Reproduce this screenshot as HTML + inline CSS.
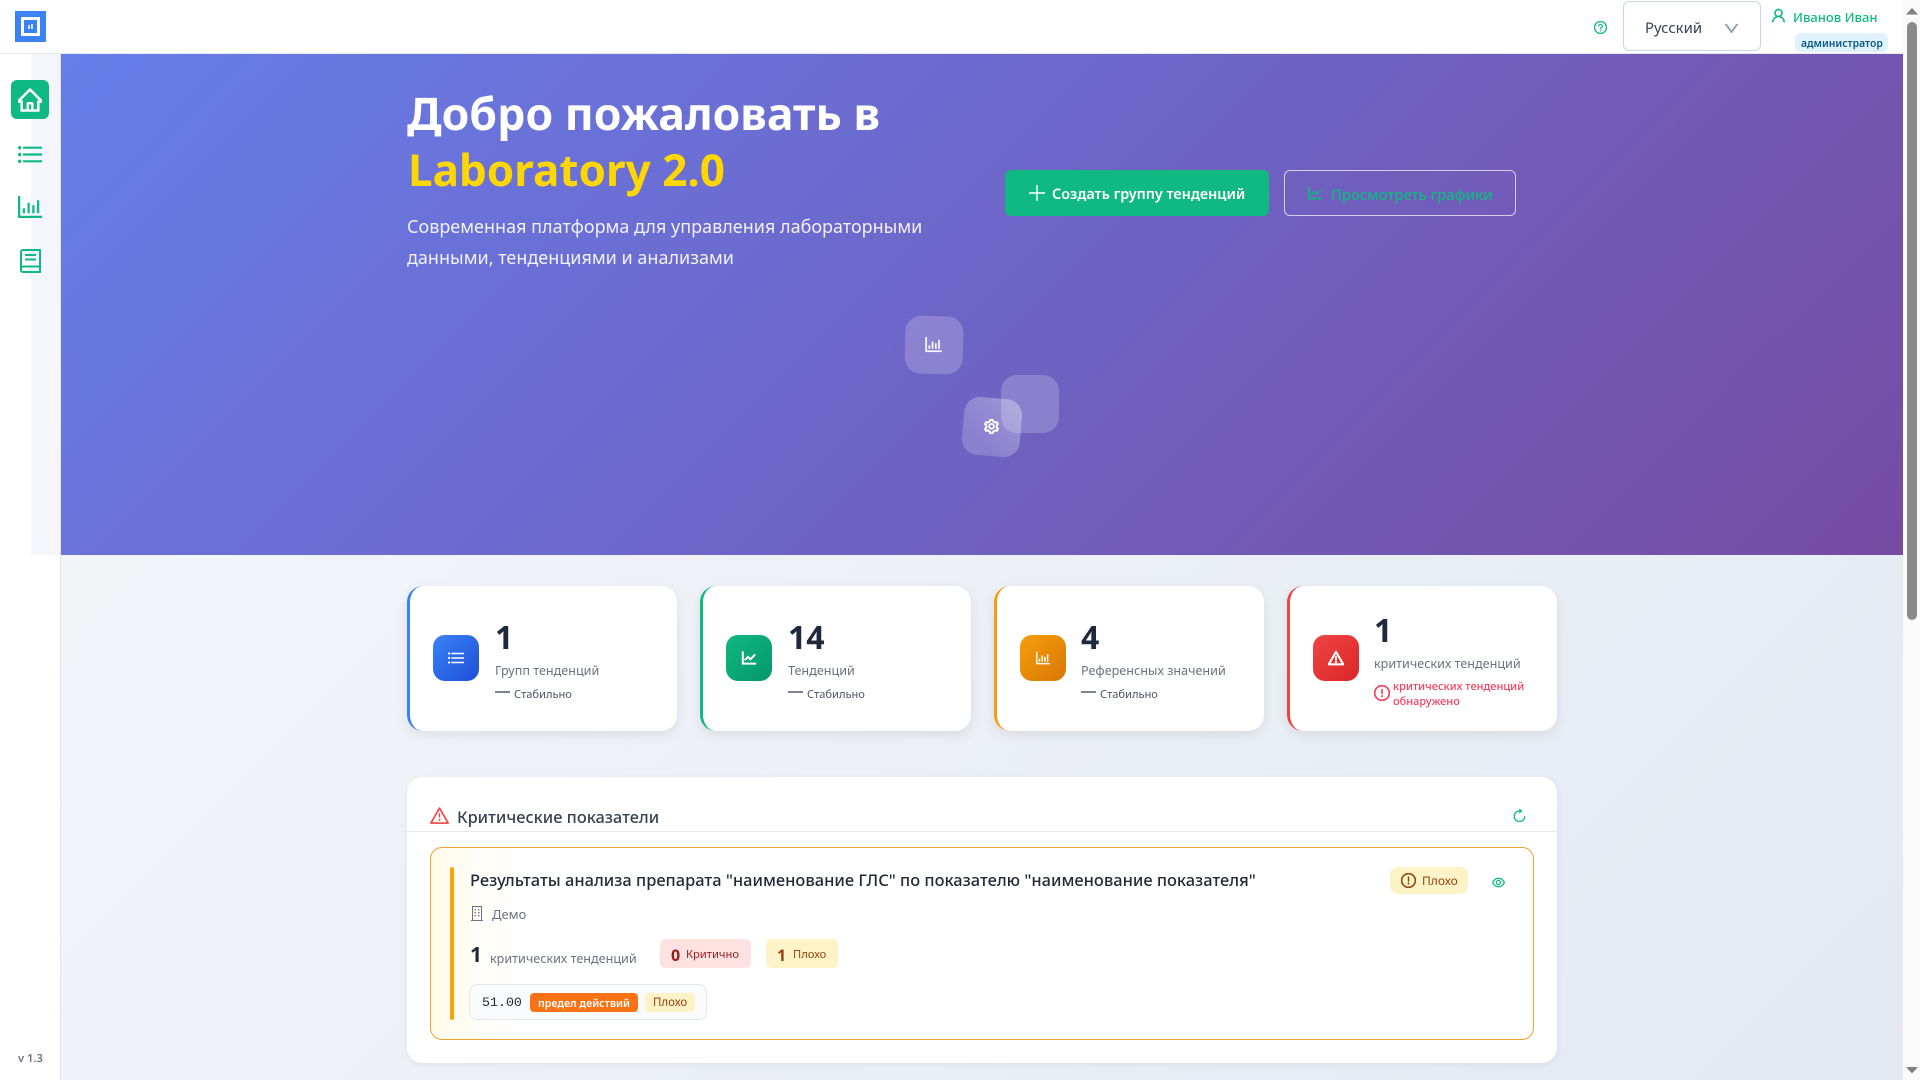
<!DOCTYPE html>
<html lang="ru"><head><meta charset="utf-8"><title>Laboratory 2.0</title>
<style>
*{box-sizing:border-box}
html,body{margin:0;padding:0;width:1920px;height:1080px;overflow:hidden;background:#fff}
body{position:relative;font-family:"Noto Sans","Noto Sans CJK SC","Liberation Sans",sans-serif;color:#1f2937}
.a{position:absolute}
.t{position:absolute;white-space:nowrap;line-height:20px}
svg{position:absolute;display:block;fill:currentColor}
svg.s{stroke:currentColor;stroke-width:10}
svg.b{stroke:currentColor;stroke-width:22}
svg.bb{stroke:currentColor;stroke-width:40}
.card{position:absolute;top:586px;width:270px;height:145px;background:#fff;border-radius:16px;box-shadow:0 4px 12px rgba(0,0,0,.08);border-left:3px solid}
.ic{position:absolute;top:635px;width:46px;height:46px;border-radius:12px;color:#fff}
.num{position:absolute;white-space:nowrap;font-size:32px;font-weight:700;line-height:40px;color:#1e293b}
.lab{position:absolute;white-space:nowrap;font-size:12.6px;line-height:20px;color:#6b7280}
.st{position:absolute;white-space:nowrap;font-size:11.1px;line-height:16px;color:#4b5563}
.dash{position:absolute;width:15px;height:2px;background:#7b8494}
</style></head><body>
<svg width="0" height="0" style="position:absolute"><defs>
<symbol id="home" viewBox="64 64 896 896"><path d="M946.5 505L560.1 118.8l-25.9-25.9a31.5 31.5 0 0 0-44.4 0L77.5 505a63.9 63.9 0 0 0-18.8 46c.4 35.2 29.7 63.3 64.9 63.3h42.5V940h691.8V614.3h43.4c17.1 0 33.2-6.7 45.3-18.8a63.6 63.6 0 0 0 18.7-45.3c0-17-6.7-33.1-18.8-45.2zM568 868H456V664h112v204zm217.9-325.7V868H632V640c0-22.1-17.9-40-40-40H432c-22.1 0-40 17.9-40 40v228H238.1V542.3h-96l370-369.7 23.1 23.1L882 542.3h-96.1z"/></symbol>
<symbol id="list" viewBox="0 0 24 17"><path d="M5 .6h19v2.200H5zM5 7.400h19v2.200H5zM5 14.200h19v2.200H5z"/><circle cx="1.700" cy="1.700" r="1.700"/><circle cx="1.700" cy="8.500" r="1.700"/><circle cx="1.700" cy="15.300" r="1.700"/></symbol>
<symbol id="bar" viewBox="64 64 896 896"><path d="M888 792H200V168c0-4.4-3.6-8-8-8h-56c-4.4 0-8 3.6-8 8v688c0 4.4 3.6 8 8 8h752c4.4 0 8-3.6 8-8v-56c0-4.4-3.6-8-8-8zm-600-80h56c4.4 0 8-3.6 8-8V560c0-4.4-3.6-8-8-8h-56c-4.4 0-8 3.6-8 8v144c0 4.4 3.6 8 8 8zm152 0h56c4.4 0 8-3.6 8-8V384c0-4.4-3.6-8-8-8h-56c-4.4 0-8 3.6-8 8v320c0 4.4 3.6 8 8 8zm152 0h56c4.4 0 8-3.6 8-8V462c0-4.4-3.6-8-8-8h-56c-4.4 0-8 3.6-8 8v242c0 4.4 3.6 8 8 8zm152 0h56c4.4 0 8-3.6 8-8V304c0-4.4-3.6-8-8-8h-56c-4.4 0-8 3.6-8 8v400c0 4.4 3.6 8 8 8z"/></symbol>
<symbol id="line" viewBox="64 64 896 896"><path d="M888 792H200V168c0-4.4-3.6-8-8-8h-56c-4.4 0-8 3.6-8 8v688c0 4.4 3.6 8 8 8h752c4.4 0 8-3.6 8-8v-56c0-4.4-3.6-8-8-8zM305.8 637.7c3.1 3.1 8.1 3.1 11.3 0l138.3-137.6L583 628.5c3.1 3.1 8.2 3.1 11.3 0l275.4-275.3c3.1-3.1 3.1-8.2 0-11.3l-39.6-39.6a8.03 8.03 0 0 0-11.3 0l-230 229.9L461.4 404a8.03 8.03 0 0 0-11.3 0L266.3 586.7a8.03 8.03 0 0 0 0 11.4l39.5 39.6z"/></symbol>
<symbol id="gear" viewBox="64 64 896 896"><path d="M924.8 625.7l-65.5-56c3.1-19 4.7-38.4 4.7-57.8s-1.6-38.8-4.7-57.8l65.5-56a32.03 32.03 0 0 0 9.3-35.2l-.9-2.6a443.74 443.74 0 0 0-79.7-137.9l-1.8-2.1a32.12 32.12 0 0 0-35.1-9.5l-81.3 28.9c-30-24.6-63.5-44-99.7-57.6l-15.7-85a32.05 32.05 0 0 0-25.8-25.7l-2.7-.5c-52.1-9.4-106.9-9.4-159 0l-2.7.5a32.05 32.05 0 0 0-25.8 25.7l-15.8 85.4a351.86 351.86 0 0 0-99 57.4l-81.9-29.1a32 32 0 0 0-35.1 9.5l-1.8 2.1a446.02 446.02 0 0 0-79.7 137.9l-.9 2.6c-4.5 12.5-.8 26.5 9.3 35.2l66.3 56.6c-3.1 18.8-4.6 38-4.6 57.1 0 19.2 1.5 38.4 4.6 57.1L99 625.5a32.03 32.03 0 0 0-9.3 35.2l.9 2.6c18.1 50.4 44.9 96.9 79.7 137.9l1.8 2.1a32.12 32.12 0 0 0 35.1 9.5l81.9-29.1c29.8 24.5 63.1 43.9 99 57.4l15.8 85.4a32.05 32.05 0 0 0 25.8 25.7l2.7.5a449.4 449.4 0 0 0 159 0l2.7-.5a32.05 32.05 0 0 0 25.8-25.7l15.7-85a350 350 0 0 0 99.7-57.6l81.3 28.9a32 32 0 0 0 35.1-9.5l1.8-2.1c34.8-41.1 61.6-87.5 79.7-137.9l.9-2.6c4.5-12.3.8-26.3-9.3-35zM788.3 465.9c2.5 15.1 3.8 30.6 3.8 46.1s-1.3 31-3.8 46.1l-6.6 40.1 74.7 63.9a370.03 370.03 0 0 1-42.6 73.6L721 702.8l-31.4 25.8c-23.9 19.6-50.5 35-79.3 45.8l-38.1 14.3-17.9 97a377.5 377.5 0 0 1-85 0l-17.9-97.2-37.8-14.5c-28.5-10.8-55-26.2-78.7-45.7l-31.4-25.9-93.4 33.2c-17-22.9-31.2-47.6-42.6-73.6l75.5-64.5-6.5-40c-2.4-14.9-3.7-30.3-3.7-45.5 0-15.3 1.2-30.6 3.7-45.5l6.5-40-75.5-64.5c11.3-26.1 25.6-50.7 42.6-73.6l93.4 33.2 31.4-25.9c23.7-19.5 50.2-34.9 78.7-45.7l37.9-14.3 17.9-97.2c28.1-3.2 56.8-3.2 85 0l17.9 97 38.1 14.3c28.7 10.8 55.4 26.2 79.3 45.8l31.4 25.8 92.8-32.9c17 22.9 31.2 47.6 42.6 73.6L781.8 426l6.5 39.9zM512 326c-97.2 0-176 78.8-176 176s78.8 176 176 176 176-78.8 176-176-78.8-176-176-176zm79.2 255.2A111.6 111.6 0 0 1 512 614c-29.9 0-58-11.7-79.2-32.8A111.6 111.6 0 0 1 400 502c0-29.9 11.7-58 32.8-79.2C454 401.6 482.1 390 512 390c29.9 0 58 11.6 79.2 32.8A111.6 111.6 0 0 1 624 502c0 29.9-11.7 58-32.8 79.2z"/></symbol>
<symbol id="exc" viewBox="64 64 896 896"><path d="M512 64C264.6 64 64 264.6 64 512s200.6 448 448 448 448-200.6 448-448S759.4 64 512 64zm0 820c-205.4 0-372-166.6-372-372s166.6-372 372-372 372 166.6 372 372-166.6 372-372 372z"/><path d="M464 688a48 48 0 1 0 96 0 48 48 0 1 0-96 0zm24-112h48c4.4 0 8-3.6 8-8V296c0-4.4-3.6-8-8-8h-48c-4.4 0-8 3.6-8 8v272c0 4.4 3.6 8 8 8z"/></symbol>
<symbol id="warn" viewBox="64 64 896 896"><path d="M464 720a48 48 0 1 0 96 0 48 48 0 1 0-96 0zm16-304v184c0 4.4 3.6 8 8 8h48c4.4 0 8-3.6 8-8V416c0-4.4-3.6-8-8-8h-48c-4.4 0-8 3.6-8 8zm475.7 440l-416-720c-6.2-10.7-16.9-16-27.7-16s-21.6 5.3-27.7 16l-416 720C56 877.4 71.4 904 96 904h832c24.6 0 40-26.6 27.7-48zm-783.5-27.9L512 239.9l339.8 588.2H172.2z"/></symbol>
</defs></svg>

<!-- page background -->
<div class="a" style="left:61px;top:54px;width:1842px;height:1026px;background:linear-gradient(135deg,#f5f7fa 0%,#e4e9f2 100%)"></div>
<!-- sidebar -->
<div class="a" style="left:31px;top:54px;width:29px;height:501px;background:#f4f6fc"></div>
<div class="a" style="left:60px;top:54px;width:1px;height:1026px;background:#e5e7eb"></div>
<!-- header -->
<div class="a" style="left:0;top:0;width:1903px;height:54px;background:#fff;border-bottom:1px solid #e5e7eb"></div>
<div class="a" style="left:15px;top:11px;width:31px;height:31px;background:#3b82f6"></div>
<div class="a" style="left:21px;top:17px;width:19px;height:19px;background:#3b82f6;border:3px solid #fff"></div>
<div class="a" style="left:28px;top:25px;width:2px;height:4px;background:#cfe0fd"></div>
<div class="a" style="left:31px;top:24px;width:2px;height:5px;background:#cfe0fd"></div>
<!-- hero -->
<div class="a" style="left:61px;top:54px;width:1842px;height:501px;background:linear-gradient(135deg,#667eea 0%,#764ba2 100%)"></div>
<div class="t" style="left:407px;top:86px;font-size:44.6px;font-weight:700;line-height:56px;color:#fff">Добро пожаловать в</div>
<div class="t" style="left:408px;top:141px;font-size:44px;font-weight:700;line-height:56px;color:#ffd700">Laboratory 2.0</div>
<div class="t" style="left:407px;top:212px;font-size:18px;line-height:31px;color:rgba(255,255,255,.9)">Современная платформа для управления лабораторными<br>данными, тенденциями и анализами</div>
<div class="a" style="left:1005px;top:170px;width:264px;height:46px;background:#10b981;border-radius:6px"></div>
<svg style="left:1029px;top:185px;color:#fff" width="16" height="16"><path d="M7.300 0h1.400v16H7.300zM0 7.300h16v1.400H0z"/></svg>
<div class="t" style="left:1052px;top:185px;font-size:14.400px;font-weight:600;color:#fff">Создать группу тенденций</div>
<div class="a" style="left:1284px;top:170px;width:232px;height:46px;border:1px solid rgba(255,255,255,.7);border-radius:6px"></div>
<svg class="b" style="left:1307px;top:185px;color:#10b981" width="16" height="16"><use href="#line"/></svg>
<div class="t" style="left:1331px;top:184.500px;font-size:14.700px;font-weight:500;color:#10b981">Просмотреть графики</div>
<!-- floating -->
<div class="a" style="left:905px;top:316px;width:58px;height:58px;border-radius:16px;background:rgba(255,255,255,.2);transform:rotate(1.500deg)"></div>
<svg class="s" style="left:924px;top:335px;color:#fff;opacity:.95" width="19" height="19"><use href="#bar"/></svg>
<div class="a" style="left:1001px;top:375px;width:58px;height:58px;border-radius:16px;background:rgba(255,255,255,.2)"></div>
<div class="a" style="left:963px;top:398px;width:58px;height:58px;border-radius:16px;background:linear-gradient(45deg,rgba(255,255,255,.2) 30%,rgba(255,255,255,.34));transform:rotate(5deg)"></div>
<svg class="bb" style="left:984px;top:419px;color:#fff" width="15" height="15"><use href="#gear"/></svg>

<!-- stat cards -->
<div class="card" style="left:407px;border-left-color:#3b82f6"></div>
<div class="card" style="left:700px;width:271px;border-left-color:#10b981"></div>
<div class="card" style="left:994px;border-left-color:#f59e0b"></div>
<div class="card" style="left:1287px;border-left-color:#ef4444"></div>

<div class="ic" style="left:433px;background:linear-gradient(135deg,#3b82f6,#1d4ed8)"><svg style="left:15px;top:17px" width="16" height="12"><use href="#list"/></svg></div>
<div class="ic" style="left:726px;background:linear-gradient(135deg,#10b981,#059669)"><svg class="bb" style="left:15px;top:15px" width="16" height="16"><use href="#line"/></svg></div>
<div class="ic" style="left:1020px;background:linear-gradient(135deg,#f59e0b,#d97706)"><svg class="s" style="left:15px;top:15px" width="16" height="16"><use href="#bar"/></svg></div>
<div class="ic" style="left:1313px;background:linear-gradient(135deg,#ef4444,#dc2626)"><svg class="bb" style="left:15px;top:15px" width="16" height="16"><use href="#warn"/></svg></div>

<div class="num" style="left:495px;top:618px">1</div>
<div class="lab" style="left:495px;top:661px">Групп тенденций</div>
<div class="dash" style="left:495px;top:691px"></div>
<div class="st" style="left:514px;top:687px">Стабильно</div>

<div class="num" style="left:788px;top:618px">14</div>
<div class="lab" style="left:788px;top:661px">Тенденций</div>
<div class="dash" style="left:788px;top:691px"></div>
<div class="st" style="left:807px;top:687px">Стабильно</div>

<div class="num" style="left:1081px;top:618px">4</div>
<div class="lab" style="left:1081px;top:661px">Референсных значений</div>
<div class="dash" style="left:1081px;top:691px"></div>
<div class="st" style="left:1100px;top:687px">Стабильно</div>

<div class="num" style="left:1374px;top:611px">1</div>
<div class="lab" style="left:1374px;top:654px">критических тенденций</div>
<svg class="b" style="left:1374px;top:685px;color:#f43f5e" width="16" height="16"><use href="#exc"/></svg>
<div class="st" style="left:1393px;top:679px;line-height:15px;font-size:11px;color:#f43f5e;font-weight:500">критических тенденций<br>обнаружено</div>

<!-- section -->
<div class="a" style="left:407px;top:777px;width:1150px;height:286px;background:#fff;border-radius:16px;box-shadow:0 2px 8px rgba(0,0,0,.05)"></div>
<div class="a" style="left:407px;top:831px;width:1150px;height:1px;background:#e5e7eb"></div>
<svg style="left:430px;top:806px;color:#ef4444" width="19" height="19"><use href="#warn"/></svg>
<div class="t" style="left:457px;top:807px;font-size:16.400px;font-weight:500;color:#374151">Критические показатели</div>
<svg style="left:1513px;top:808px;color:#10b981" width="13" height="14" viewBox="0 0 13 14"><path style="fill:none;stroke:#10b981;stroke-width:1.300" d="M6.500 3A5.300 5.300 0 1 0 11.800 8.300"/><path d="M6.300 .3L9.400 3 6.300 5.700z"/></svg>

<div class="a" style="left:430px;top:847px;width:1104px;height:193px;border:1px solid #f0a030;border-radius:12px;background:linear-gradient(90deg,#fffbeb 0,#fff 90px)"></div>
<div class="a" style="left:450px;top:867px;width:4px;height:153px;background:#ffa30a;border-radius:2px"></div>
<div class="t" style="left:470px;top:870px;font-size:16.440px;font-weight:500;color:#1f2937">Результаты анализа препарата "наименование ГЛС" по показателю "наименование показателя"</div>
<svg style="left:471px;top:906px;color:#6b7280" width="12" height="15" viewBox="0 0 12 15"><path style="fill:none;stroke:#6b7280" d="M1.500.5h9v14h-9zM0 14.500h12"/><path d="M3.500 3h1.400v1.400H3.500zM7 3h1.400v1.400H7zM3.500 6h1.400v1.400H3.500zM7 6h1.400v1.400H7zM3.500 9h1.400v1.400H3.500zM7 9h1.400v1.400H7z"/></svg>
<div class="t" style="left:492px;top:904px;font-size:13px;color:#6b7280">Демо</div>

<div class="t" style="left:470px;top:945px;font-size:21px;font-weight:700;color:#1e293b">1</div>
<div class="t" style="left:490px;top:949px;font-size:12.600px;color:#6b7280">критических тенденций</div>
<div class="a" style="left:660px;top:939px;width:91px;height:29px;background:#fee2e2;border-radius:5px"></div>
<div class="t" style="left:671px;top:944.500px;font-size:16px;font-weight:700;color:#991b1b">0</div>
<div class="t" style="left:686px;top:945px;font-size:11.200px;color:#991b1b">Критично</div>
<div class="a" style="left:766px;top:939px;width:72px;height:29px;background:#fef3c7;border-radius:5px"></div>
<div class="t" style="left:777px;top:944.500px;font-size:16px;font-weight:700;color:#92400e">1</div>
<div class="t" style="left:793px;top:945px;font-size:11.200px;color:#92400e">Плохо</div>
<div class="a" style="left:469px;top:984px;width:238px;height:36px;background:#f9fafb;border:1px solid #e5e7eb;border-radius:8px"></div>
<div class="t" style="left:482px;top:993px;font-family:'Liberation Mono',monospace;font-size:13.300px;color:#1f2937">51.00</div>
<div class="a" style="left:530px;top:993px;width:108px;height:19px;background:#f97316;border-radius:4px"></div>
<div class="t" style="left:538px;top:994px;font-size:10.660px;font-weight:600;color:#fff">предел действий</div>
<div class="a" style="left:645px;top:993px;width:50px;height:19px;background:#fef3c7;border-radius:4px"></div>
<div class="t" style="left:653px;top:993px;font-size:11.500px;color:#92400e">Плохо</div>

<div class="a" style="left:1390px;top:867px;width:78px;height:27px;background:#fef3c7;border-radius:8px"></div>
<svg class="b" style="left:1401px;top:873px;color:#92400e" width="15" height="15"><use href="#exc"/></svg>
<div class="t" style="left:1422px;top:871px;font-size:12px;color:#92400e">Плохо</div>
<svg class="b" style="left:1492px;top:876px;color:#10b981" width="13" height="13" viewBox="64 64 896 896"><path d="M942.2 486.2C847.4 286.5 704.1 186 512 186c-192.2 0-335.4 100.5-430.2 300.3a60.3 60.3 0 0 0 0 51.5C176.6 737.5 319.9 838 512 838c192.2 0 335.4-100.5 430.2-300.3 7.7-16.2 7.7-35 0-51.5zM512 766c-161.3 0-279.4-81.8-362.7-254C232.6 339.8 350.7 258 512 258c161.3 0 279.4 81.8 362.7 254C791.5 684.2 673.4 766 512 766zm-4-430c-97.2 0-176 78.8-176 176s78.8 176 176 176 176-78.8 176-176-78.8-176-176-176zm0 288c-61.9 0-112-50.1-112-112s50.1-112 112-112 112 50.1 112 112-50.1 112-112 112z"/></svg>

<!-- sidebar icons -->
<div class="a" style="left:11px;top:80px;width:38px;height:39px;background:#10b981;border-radius:6px"></div>
<svg class="b" style="left:18px;top:88px;color:#fff" width="24" height="24"><use href="#home"/></svg>
<svg style="left:18px;top:145.500px;color:#10b981" width="24" height="17"><use href="#list"/></svg>
<svg style="left:16px;top:193px;color:#10b981" width="28" height="28"><use href="#bar"/></svg>
<svg style="left:20px;top:249px;color:#10b981" width="21" height="24" viewBox="0 0 21 24"><path style="fill:none;stroke:#10b981;stroke-width:2" d="M1 19.500V3a2 2 0 0 1 2-2h17v22H3a2 2 0 0 1-2-2v-1.500a2 2 0 0 1 2-2h17"/><path d="M5 5h11v2H5zM5 9.500h11v2H5z"/></svg>
<div class="t" style="left:18px;top:1049px;font-size:11.200px;font-weight:600;color:#6b7280">v 1.3</div>

<!-- top right -->
<svg class="b" style="left:1594px;top:21px;color:#10b981" width="13" height="13" viewBox="64 64 896 896"><path d="M512 64C264.600 64 64 264.600 64 512s200.600 448 448 448 448-200.600 448-448S759.400 64 512 64zm0 820c-205.400 0-372-166.600-372-372s166.600-372 372-372 372 166.600 372 372-166.600 372-372 372z"/><path d="M623.600 316.700C593.600 290.400 554 276 512 276s-81.600 14.500-111.600 40.700C369.200 344 352 380.700 352 420v7.600c0 4.400 3.600 8 8 8h48c4.400 0 8-3.600 8-8V420c0-44.100 43.100-80 96-80s96 35.900 96 80c0 31.100-22 59.600-56.100 72.700-21.200 8.100-39.200 22.300-52.100 40.900-13.100 19-19.900 41.800-19.900 64.900V620c0 4.400 3.600 8 8 8h48c4.400 0 8-3.600 8-8v-22.700a48.300 48.300 0 0 1 30.900-44.800c59-22.700 97.100-74.700 97.100-132.500.1-39.300-17.100-76-48.300-103.300zM472 732a40 40 0 1 0 80 0 40 40 0 1 0-80 0z"/></svg>
<div class="a" style="left:1623px;top:1px;width:138px;height:50px;background:#fff;border:1px solid #cbd5e1;border-radius:6px"></div>
<div class="t" style="left:1645px;top:18px;font-size:14.900px;color:#374151">Русский</div>
<svg class="bb" style="left:1724px;top:21px;color:#94a3b8" width="15" height="15" viewBox="64 64 896 896"><path d="M884 256h-75c-5.100 0-9.900 2.500-12.900 6.600L512 654.200 227.900 262.600c-3-4.100-7.800-6.600-12.900-6.600h-75c-6.500 0-10.300 7.400-6.500 12.700l352.600 486.100c12.800 17.600 39 17.600 51.700 0l352.600-486.100c3.900-5.300.1-12.700-6.400-12.700z"/></svg>
<svg class="b" style="left:1771px;top:8px;color:#10b981" width="15" height="15" viewBox="64 64 896 896"><path d="M858.500 763.600a374 374 0 0 0-80.600-119.500 375.630 375.630 0 0 0-119.500-80.600c-.4-.2-.8-.3-1.200-.5C719.500 518 760 444.700 760 362c0-137-111-248-248-248S264 225 264 362c0 82.700 40.500 156 102.800 201.100-.4.200-.8.300-1.200.5-44.800 18.900-85 46-119.500 80.600a375.630 375.630 0 0 0-80.600 119.500A371.700 371.700 0 0 0 136 901.800a8 8 0 0 0 8 8.200h60c4.400 0 7.900-3.500 8-7.800 2-77.200 33-149.500 87.800-204.300 56.700-56.700 132-87.900 212.200-87.900s155.500 31.200 212.200 87.900C779 752.700 810 825 812 902.200c.1 4.400 3.600 7.800 8 7.800h60a8 8 0 0 0 8-8.200c-1-47.800-10.900-94.300-29.500-138.200zM512 534c-45.900 0-89.100-17.900-121.600-50.400S340 407.900 340 362c0-45.900 17.900-89.100 50.400-121.600S466.100 190 512 190s89.100 17.900 121.600 50.400S684 316.100 684 362c0 45.900-17.900 89.100-50.400 121.600S557.900 534 512 534z"/></svg>
<div class="t" style="left:1793px;top:7px;font-size:13px;font-weight:500;color:#10b981">Иванов Иван</div>
<div class="a" style="left:1795px;top:33px;width:93px;height:19px;background:#e0f2fe;border-radius:6px"></div>
<div class="t" style="left:1801px;top:35px;font-size:10.400px;font-weight:600;line-height:19px;color:#075985">администратор</div>

<!-- scrollbar -->
<div class="a" style="left:1903px;top:0;width:17px;height:1080px;background:#fafafa"></div>
<div class="a" style="left:1907px;top:22px;width:10px;height:598px;background:#8a8a8a;border-radius:5px"></div>
<svg style="left:1906px;top:8px;color:#808080" width="12" height="7"><path d="M6 0l6 6.500H0z"/></svg>
<svg style="left:1906px;top:1067px;color:#808080" width="12" height="7"><path d="M0 0h12L6 6.500z"/></svg>
</body></html>
